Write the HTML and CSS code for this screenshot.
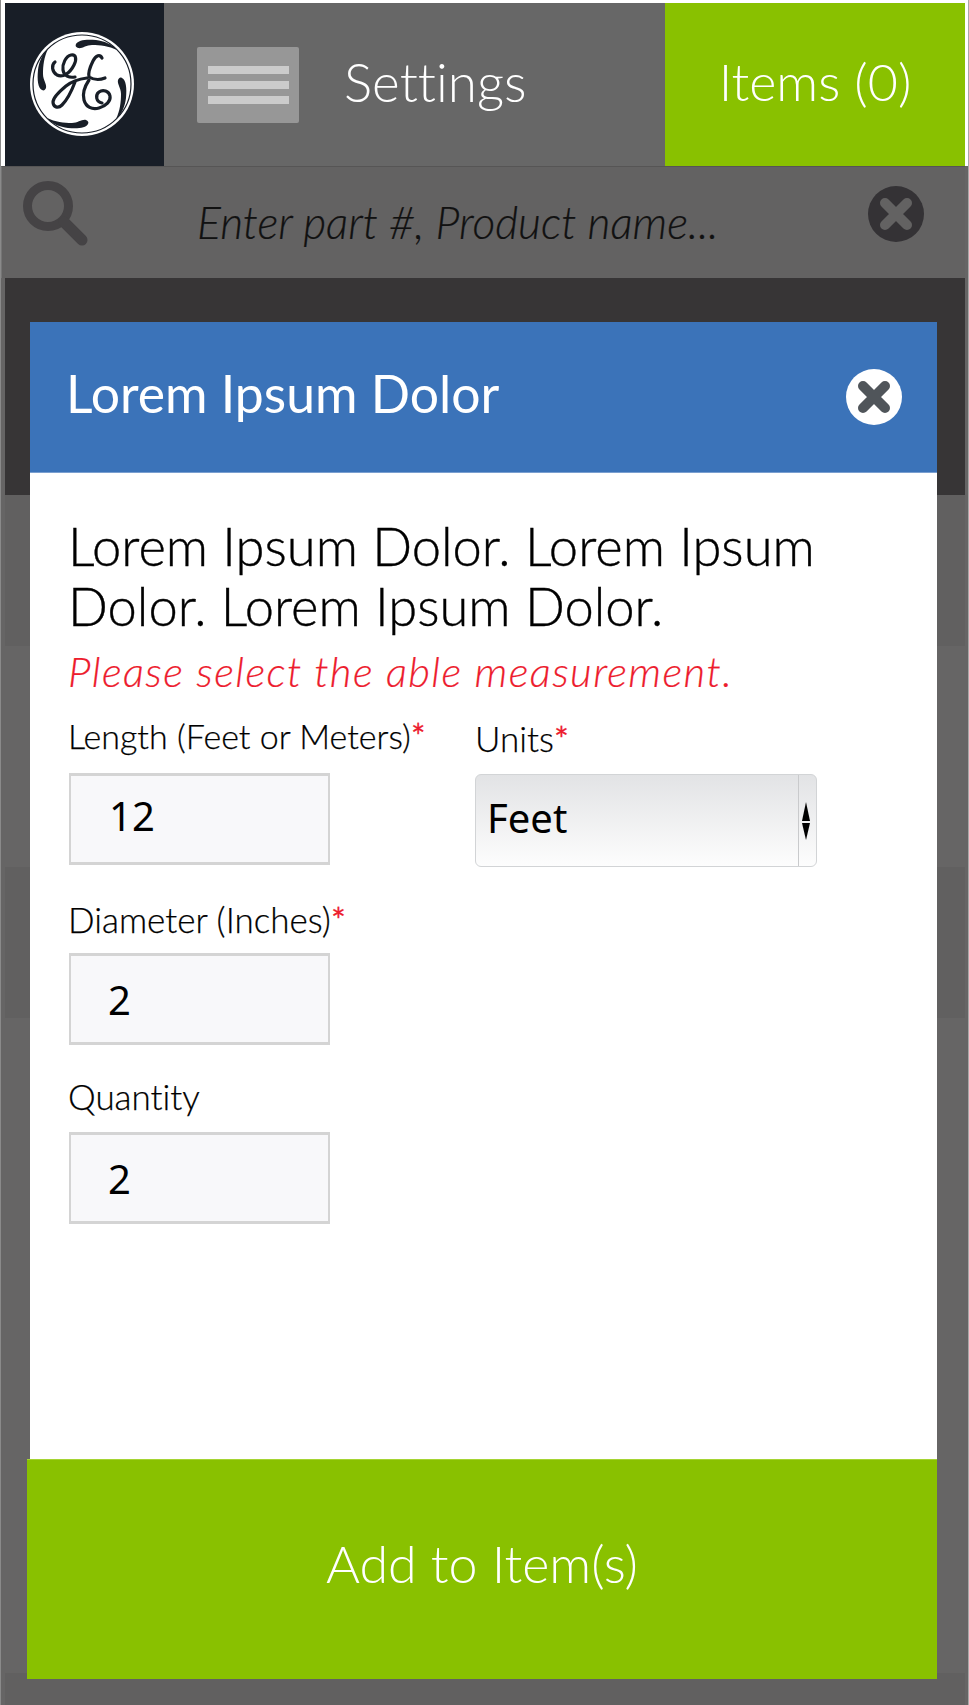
FILE: index.html
```html
<!DOCTYPE html>
<html lang="en">
<head>
    <meta charset="UTF-8">
    <title>Items</title>
    <link rel="stylesheet" href="styles.css">
</head>
<body>
    <div class="top_bar">
        <div class="logo">
            <svg class="ge_logo" viewBox="0 0 104 104">
                <defs>
                    <path id="swoosh" d="M46 12C48 8 56 7 66 8C74 9 82 12 87 18C79 14 70 13 62 13C56 13 52 17 48 16C46 15 45 14 46 12z" fill="#181e27"/>
                </defs>
                <circle cx="52" cy="52" r="52" fill="#fff"/>
                <circle cx="52" cy="52" r="49" fill="none" stroke="#181e27" stroke-width="1.2"/>
                <!-- swooshes round the rim -->
                <use href="#swoosh"/>
                <use href="#swoosh" transform="rotate(90 52 52)"/>
                <use href="#swoosh" transform="rotate(180 52 52)"/>
                <use href="#swoosh" transform="rotate(270 52 52)"/>
                <g fill="none" stroke="#181e27" stroke-width="3.2" stroke-linecap="round" stroke-linejoin="round">
                    <!-- script G -->
                    <path d="M25 30C21 33 22 40 27 43C33 46 40 41 44 33C47 27 46 22 41 23C36 24 32 32 33 38C34 44 39 46 45 45"/>
                    <path d="M57 46C49 47 42 49 36 54C30 59 23 65 23 70C23 75 28 77 32 73C38 67 42 58 45 50"/>
                    <!-- script E -->
                    <path d="M72 26C70 22 66 23 63 29C60 35 58 41 59 45C64 48 70 48 75 46"/>
                    <path d="M59 48C55 54 52 61 54 68C56 75 62 78 69 76C76 74 81 69 80 64C79 59 73 57 69 60C65 63 66 70 72 71"/>
                </g>
            </svg>
        </div>
        <div class="settings">
            <div class="menu_btn">
                <span></span>
                <span></span>
                <span></span>
            </div>
            <div class="settings_txt">Settings</div>
        </div>
        <div class="items_btn">Items (0)</div>
    </div>

    <div class="search_bar">
        <svg class="search_icon" viewBox="0 0 66 66">
            <circle cx="25" cy="25" r="20.5" fill="none" stroke="#454345" stroke-width="9"/>
            <path d="M41 41l18 18" stroke="#454345" stroke-width="11" stroke-linecap="round"/>
        </svg>
        <div class="search_txt">Enter part #, Product name...</div>
        <svg class="clear_icon" viewBox="0 0 56 56">
            <circle cx="28" cy="28" r="28" fill="#343235"/>
            <path d="M17 17l22 22M39 17l-22 22" stroke="#636262" stroke-width="10" stroke-linecap="round"/>
        </svg>
    </div>

    <div class="list">
        <div class="list_dark"></div>
        <div class="list_row"></div>
        <div class="list_gap"></div>
        <div class="list_row"></div>
        <div class="list_gap list_gap_long"></div>
        <div class="list_row list_row_cut"></div>
    </div>

    <div class="modal">
        <div class="modal_head">
            <h2>Lorem Ipsum Dolor</h2>
            <svg class="close_icon" viewBox="0 0 56 56">
                <circle cx="28" cy="28" r="28" fill="#fff"/>
                <path d="M17 17l22 22M39 17l-22 22" stroke="#50555a" stroke-width="10" stroke-linecap="round"/>
            </svg>
        </div>
        <div class="modal_body">
            <p class="intro">Lorem Ipsum Dolor. Lorem Ipsum Dolor. Lorem Ipsum Dolor.</p>
            <p class="warn">Please select the able measurement.</p>
            <div class="form_row">
                <div class="field field_len">
                    <label>Length (Feet or Meters)<em>*</em></label>
                    <div class="txt_input"><span>12</span></div>
                </div>
                <div class="field field_units">
                    <label>Units<em>*</em></label>
                    <div class="select_box">
                        <span class="select_val">Feet</span>
                        <span class="select_arrows"><i class="arrow_up"></i><i class="arrow_down"></i></span>
                    </div>
                </div>
            </div>
            <div class="field field_dia">
                <label>Diameter (Inches)<em>*</em></label>
                <div class="txt_input"><span>2</span></div>
            </div>
            <div class="field field_qty">
                <label>Quantity</label>
                <div class="txt_input"><span>2</span></div>
            </div>
        </div>
        <div class="add_btn">Add to Item(s)</div>
    </div>
</body>
</html>
```

FILE: styles.css
```css
*{
    margin:0;
    padding:0;
    box-sizing:border-box;
}
body{
    width:969px;
    height:1705px;
    position:relative;
    overflow:hidden;
    padding-top:3px;
    background-color:#666565;
    border-left:1px solid #8a8a8a;
    border-right:1px solid #a8a8a8;
    font-family:"Lato","Open Sans",sans-serif;
    font-weight:300;
    font-variant-ligatures:none;
}
body:before{
    content:"";
    position:absolute;
    left:-1px;
    top:0;
    width:969px;
    height:166px;
    background-color:#fff;
}
.top_bar{
    position:relative;
    display:flex;
    height:163px;
    margin-left:4px;
    width:960px;
}
.logo{
    width:159px;
    background-color:#181e27;
    display:flex;
    align-items:center;
    justify-content:center;
}
.ge_logo{
    width:104px;
    height:104px;
    margin:0 6px 1px 0;
}
.settings{
    width:501px;
    background-color:#676767;
    display:flex;
    align-items:center;
    padding-left:33px;
}
.menu_btn{
    width:102px;
    height:76px;
    background-color:#979797;
    border-radius:2px;
    padding:19px 11px 0;
}
.menu_btn span{
    display:block;
    width:81px;
    height:8px;
    margin-bottom:7px;
    background-color:#cbcbcb;
}
.settings_txt{
    margin-left:45px;
    padding-bottom:6px;
    font-size:53px;
    color:#fff;
}
.items_btn{
    width:300px;
    background-color:#89c100;
    color:#fff;
    font-size:52px;
    line-height:156px;
    text-align:center;
}
.search_bar{
    display:flex;
    align-items:center;
    position:relative;
    height:112px;
    width:964px;
    background-color:#636262;
    border-top:1px solid #565555;
    border-left:1px solid #757575;
}
.search_icon{
    width:66px;
    height:66px;
    margin:-18px 0 0 21px;
}
.search_txt{
    margin-left:108px;
    padding-bottom:2px;
    font-size:44.4px;
    font-style:italic;
    color:#111;
    -webkit-text-stroke:0.2px #111;
}
.clear_icon{
    position:absolute;
    right:41px;
    top:19px;
    width:56px;
    height:56px;
}
.list{
    margin-left:4px;
    width:960px;
}
.list_dark{
    height:217px;
    background-color:#373536;
}
.list_row{
    height:151px;
    background-color:#616060;
}
.list_row_cut{
    height:33px;
}
.list_gap{
    height:221px;
}
.list_gap_long{
    height:655px;
}
.modal{
    position:absolute;
    left:29px;
    top:322px;
    width:907px;
    height:1357px;
    display:flex;
    flex-direction:column;
    background-color:#fff;
}
.modal_head{
    height:151px;
    flex-shrink:0;
    background-color:#3b73b9;
    border-bottom:1px solid #7a9fd0;
    display:flex;
    align-items:center;
    justify-content:space-between;
    padding:0 35px 0 36px;
}
.modal_head h2{
    padding-bottom:8px;
    font-size:51.7px;
    font-weight:400;
    color:#fff;
}
.close_icon{
    width:56px;
    height:56px;
}
.modal_body{
    flex:1;
    padding:43px 38px 0;
}
.intro{
    width:760px;
    font-size:52.5px;
    line-height:60px;
    color:#000;
    -webkit-text-stroke:0.4px #000;
}
.warn{
    margin-top:10px;
    font-size:42px;
    line-height:50px;
    letter-spacing:1.4px;
    font-style:italic;
    color:#ed1c2e;
    -webkit-text-stroke:0.2px #ed1c2e;
}
.form_row{
    display:flex;
    margin-top:18px;
}
.field label{
    display:block;
    font-size:35px;
    line-height:44px;
    color:#000;
    -webkit-text-stroke:0.25px #000;
}
.field em{
    font-style:normal;
    font-weight:400;
    color:#ed1c2e;
    -webkit-text-stroke:0.25px #ed1c2e;
}
.field_len{
    width:407px;
}
.field_len label{
    font-size:34px;
}
.field_units{
    width:342px;
}
.field_units label{
    padding-top:2px;
}
.field_dia{
    margin-top:30px;
}
.field_qty{
    margin-top:29px;
}
.txt_input{
    width:261px;
    height:92px;
    margin:12px 0 0 1px;
    background-color:#f8f8fa;
    border:2px solid #d4d4d4;
    border-top-width:3px;
    border-bottom-width:3px;
    font-family:"Noto Sans",sans-serif;
    font-size:40px;
    font-weight:400;
    line-height:88px;
    color:#000;
    padding-left:37px;
}
.field_len .txt_input{
    margin-top:15px;
    line-height:80px;
    padding-left:38px;
}
.field_qty .txt_input{
    margin-top:14px;
}
.select_box{
    display:flex;
    height:93px;
    margin-top:14px;
    border:1px solid #d2d4d6;
    border-radius:6px;
    background:linear-gradient(#e2e3e5,#fdfdfd);
    align-items:stretch;
}
.select_val{
    flex:1;
    font-family:"Noto Sans",sans-serif;
    font-size:40px;
    font-weight:400;
    line-height:86px;
    padding-left:11px;
    color:#000;
}
.select_arrows{
    width:18px;
    padding-right:3px;
    border-left:1px solid #c9cacc;
    display:flex;
    flex-direction:column;
    align-items:center;
    justify-content:center;
    gap:2px;
}
.arrow_up,.arrow_down{
    display:block;
    width:0;
    height:0;
    border-left:4.5px solid transparent;
    border-right:4.5px solid transparent;
}
.arrow_up{
    border-bottom:19px solid #000;
}
.arrow_down{
    border-top:17px solid #000;
}
.add_btn{
    margin-left:-3px;
    height:220px;
    flex-shrink:0;
    background-color:#89c100;
    border-top:1px solid #a5d433;
    color:#fff;
    font-size:52px;
    line-height:206px;
    text-align:center;
}
```
